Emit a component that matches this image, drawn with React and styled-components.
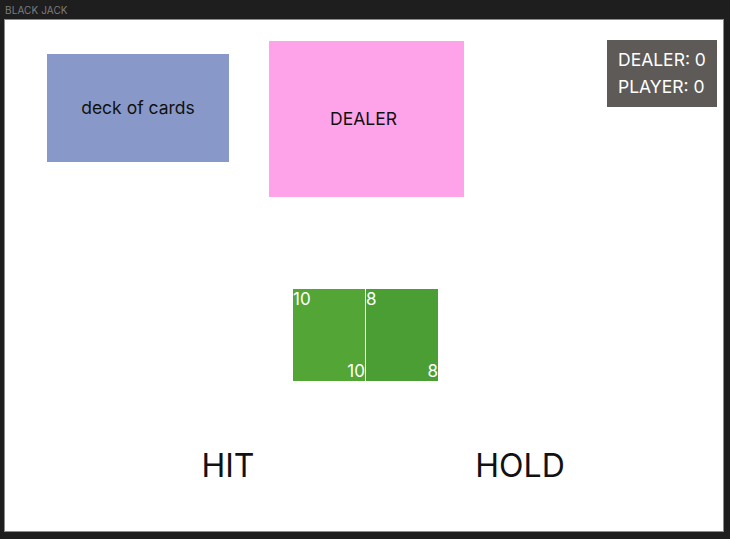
import React from 'react';
import styled, { createGlobalStyle } from 'styled-components';

const GlobalStyle = createGlobalStyle`
  html, body {
    margin: 0;
    padding: 0;
    background: #1e1e1e;
    font-family: Inter, "Liberation Sans", sans-serif;
  }
`;

const Window = styled.div`
  width: 730px;
  height: 539px;
  background: #1e1e1e;
  padding: 4px 0 0 4px;
  box-sizing: border-box;
`;

const WindowTitle = styled.div`
  height: 15px;
  font-size: 10px;
  line-height: 13px;
  color: #7c7c7c;
  padding-left: 1px;
  letter-spacing: 0.1px;
`;

const Frame = styled.div`
  width: 720px;
  height: 513px;
  box-sizing: border-box;
  background: #fff;
  border: 1px solid #8c8c8c;
  display: flex;
  flex-direction: column;
`;

const TopRow = styled.div`
  display: flex;
  align-items: flex-start;
  padding: 20px 6px 0 42px;
`;

const Deck = styled.div`
  width: 182px;
  height: 108px;
  margin-top: 14px;
  padding-bottom: 2px;
  box-sizing: border-box;
  background: #8899c9;
  display: flex;
  align-items: center;
  justify-content: center;
  font-size: 17.5px;
  color: #111;
`;

const DealerArea = styled.div`
  width: 195px;
  height: 156px;
  margin-top: 1px;
  margin-left: 40px;
  background: #fea3e9;
  display: flex;
  align-items: center;
  justify-content: center;
  padding: 0 6px 2px 0;
  box-sizing: border-box;
  font-size: 17.5px;
  color: #111;
`;

const Score = styled.div`
  margin-left: auto;
  width: 110px;
  height: 67px;
  box-sizing: border-box;
  background: #5d5a58;
  color: #fff;
  font-size: 17.5px;
  line-height: 27px;
  padding: 6px 0 0 11px;
`;

const Hand = styled.div`
  display: flex;
  gap: 1px;
  margin: 92px 0 0 288px;
`;

const Card = styled.div`
  width: 72px;
  height: 92px;
  background: ${p => p.$color};
  color: #fff;
  font-size: 17px;
  line-height: 20px;
  display: flex;
  flex-direction: column;
  justify-content: space-between;
`;

const CardValue = styled.span`
  align-self: ${p => (p.$end ? 'flex-end' : 'flex-start')};
`;

const Actions = styled.div`
  display: grid;
  grid-template-columns: 292px 292px;
  margin: 65px 0 0 77px;
`;

const Action = styled.button`
  background: none;
  border: none;
  padding: 0;
  font-family: inherit;
  font-size: 32px;
  line-height: 40px;
  color: #111;
  cursor: pointer;
  justify-self: center;
`;

const cards = [
  { value: '10', color: '#53a535' },
  { value: '8', color: '#4a9e33' },
];

export default function App() {
  return (
    <Window>
      <GlobalStyle />
      <WindowTitle>BLACK JACK</WindowTitle>
      <Frame>
        <TopRow>
          <Deck>deck of cards</Deck>
          <DealerArea>DEALER</DealerArea>
          <Score>
            <div>DEALER: 0</div>
            <div>PLAYER: 0</div>
          </Score>
        </TopRow>
        <Hand>
          {cards.map((c, i) => (
            <Card key={i} $color={c.color}>
              <CardValue>{c.value}</CardValue>
              <CardValue $end>{c.value}</CardValue>
            </Card>
          ))}
        </Hand>
        <Actions>
          <Action>HIT</Action>
          <Action>HOLD</Action>
        </Actions>
      </Frame>
    </Window>
  );
}
